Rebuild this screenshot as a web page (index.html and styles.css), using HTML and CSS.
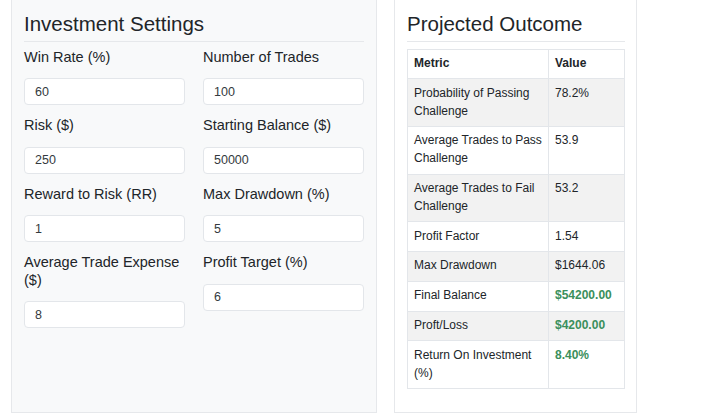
FILE: index.html
```html
<!DOCTYPE html>
<html lang="en">
  <head>
    <meta charset="UTF-8" />
    <meta name="viewport" content="width=device-width, initial-scale=1.0" />
    <title>Prop Firm Challenge Simulator</title>
    <link rel="stylesheet" href="styles.css">
  </head>
  <body>
    <div class="layout">
      <!-- inputs -->
      <div class="panel settings">
        <h2 class="panel-title">Investment Settings</h2>
        <div class="fields">
          <div class="field">
            <label for="winRate">Win Rate (%)</label>
            <input type="number" id="winRate" value="60" />
          </div>
          <div class="field">
            <label for="numTrades">Number of Trades</label>
            <input type="number" id="numTrades" value="100" />
          </div>
          <div class="field">
            <label for="risk">Risk ($)</label>
            <input type="number" id="risk" value="250" />
          </div>
          <div class="field">
            <label for="startBalance">Starting Balance ($)</label>
            <input type="number" id="startBalance" value="50000" />
          </div>
          <div class="field">
            <label for="rewardRisk">Reward to Risk (RR)</label>
            <input type="number" id="rewardRisk" value="1" />
          </div>
          <div class="field">
            <label for="maxDrawdown">Max Drawdown (%)</label>
            <input type="number" id="maxDrawdown" value="5" />
          </div>
          <div class="field">
            <label for="tradeExpense">Average Trade Expense ($)</label>
            <input type="number" id="tradeExpense" value="8" />
          </div>
          <div class="field">
            <label for="profitTarget">Profit Target (%)</label>
            <input type="number" id="profitTarget" value="6" />
          </div>
        </div>
      </div>

      <!-- results -->
      <div class="panel outcome">
        <h2 class="panel-title">Projected Outcome</h2>
        <table class="results">
          <colgroup>
            <col class="col-metric" />
            <col class="col-value" />
          </colgroup>
          <thead>
            <tr><th>Metric</th><th>Value</th></tr>
          </thead>
          <tbody>
            <tr><td>Probability of Passing Challenge</td><td>78.2%</td></tr>
            <tr><td>Average Trades to Pass Challenge</td><td>53.9</td></tr>
            <tr><td>Average Trades to Fail Challenge</td><td>53.2</td></tr>
            <tr><td>Profit Factor</td><td>1.54</td></tr>
            <tr><td>Max Drawdown</td><td>$1644.06</td></tr>
            <tr><td>Final Balance</td><td class="positive">$54200.00</td></tr>
            <tr><td>Proft/Loss</td><td class="positive">$4200.00</td></tr>
            <tr><td>Return On Investment (%)</td><td class="positive">8.40%</td></tr>
          </tbody>
        </table>
      </div>
    </div>
  </body>
</html>
```

FILE: styles.css
```css
body {
  font-family: "Liberation Sans", Arial, sans-serif;
  color: #212529;
  background: #fff;
  margin: 0;
  padding: 0 11px;
}

.layout {
  display: flex;
  align-items: stretch;
  gap: 17px;
  margin-top: -1px; /* top edge sits just above the viewport */
}

.panel {
  border: 1px solid #e6e8eb;
  padding: 12px 12px 23px;
}

.settings {
  width: 340px;
  background: #f8f9fa;
}

.outcome {
  width: 218px;
  padding-right: 11px;
  background: #fff;
}

.panel-title {
  font-size: 20.5px;
  font-weight: normal;
  line-height: 24.6px;
  margin: 0 0 7px;
  padding-bottom: 4px;
  border-bottom: 1px solid #e6e8eb;
}

.fields {
  display: grid;
  grid-template-columns: 1fr 1fr;
  column-gap: 18px;
  row-gap: 12px;
  align-items: start;
}

.field label {
  display: block;
  font-size: 14.5px;
  line-height: 17.5px;
  margin-bottom: 12px;
}

.field input {
  display: block;
  box-sizing: border-box;
  width: 100%;
  height: 27px;
  padding: 0 10px;
  font-family: inherit;
  font-size: 12.5px;
  color: #343a40;
  background: #fff;
  border: 1px solid #e3e6ea;
  border-radius: 4px;
  -moz-appearance: textfield;
}

.field input::-webkit-outer-spin-button,
.field input::-webkit-inner-spin-button {
  -webkit-appearance: none;
  margin: 0;
}

.results {
  width: 218px;
  table-layout: fixed;
  border-collapse: collapse;
  font-size: 12px;
  line-height: 17.8px;
}

.col-metric {
  width: 141px;
}

.results th,
.results td {
  border: 1px solid #e3e6ea;
  padding: 5.5px 6px;
  text-align: left;
  vertical-align: top;
}

.results th {
  font-weight: bold;
}

.results tbody tr:nth-child(odd) {
  background: #f2f2f2;
}

.positive {
  color: #3a8f5c;
  font-weight: bold;
}
```
